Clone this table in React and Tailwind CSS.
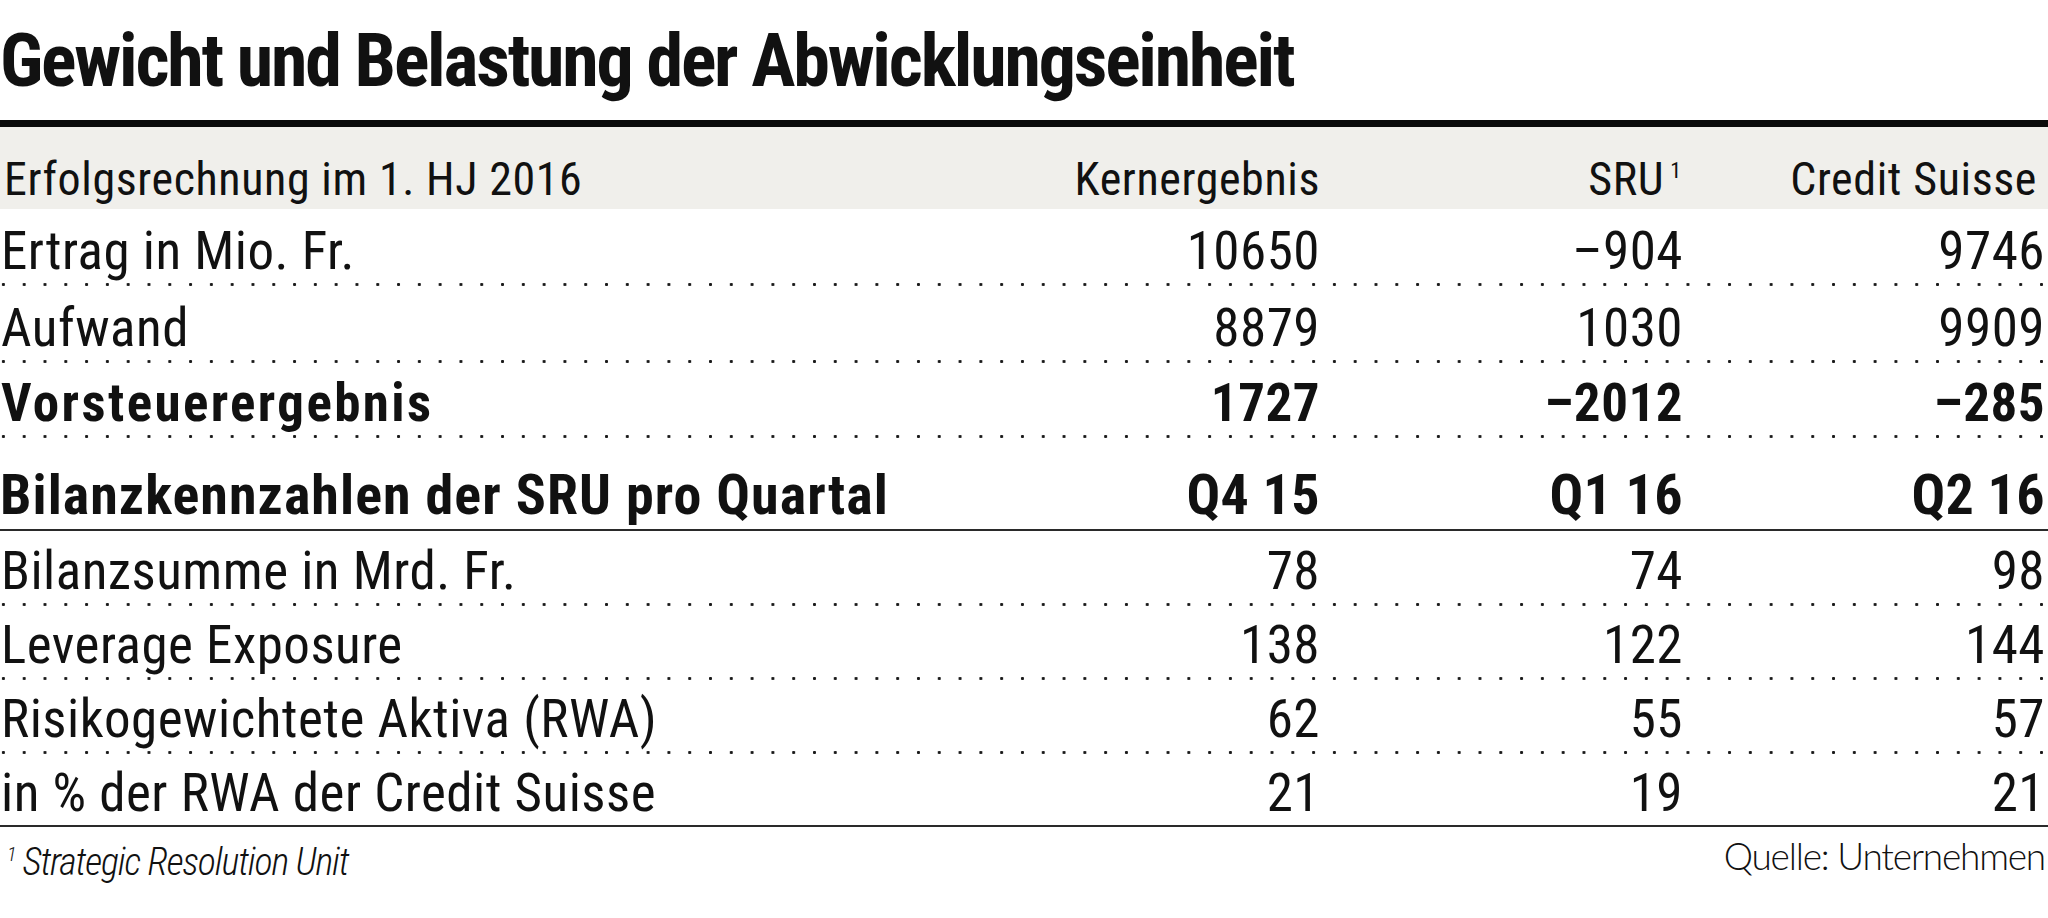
import React from "react";

const cols = "grid grid-cols-[minmax(0,1fr)_363px_363px_362px] pr-[3px]";
const dots =
  "h-[3px] w-full bg-[radial-gradient(circle,#1a1a1a_1.3px,transparent_1.8px)] bg-[length:20.8px_3px] bg-repeat-x bg-[position:-7px_0px]";

const Row = ({ label, values, bold, pad, line = "dots" }) => (
  <div>
    <div
      className={`${cols} ${pad} leading-[64px] text-[53px] tracking-[0.5px] ${
        bold ? "font-bold" : ""
      }`}
    >
      <div className={`pl-[1px] whitespace-nowrap ${bold ? "tracking-[2.4px]" : ""}`}>{label}</div>
      {values.map((v, i) => (
        <div key={i} className="text-right">
          {v}
        </div>
      ))}
    </div>
    {line === "dots" ? (
      <div className={dots} />
    ) : (
      <div className="h-[2px] bg-[#2a2a2a]" />
    )}
  </div>
);

export default function App() {
  return (
    <div className="w-[2048px] h-[918px] overflow-hidden bg-white text-[#111] font-stretch-condensed font-['Roboto_Condensed','Liberation_Sans_Narrow','DejaVu_Sans_Condensed','Noto_Sans',sans-serif]">
      {/* Title */}
      <div className="h-[120px] pt-[21px]">
        <h1 className="text-[74px] leading-[80px] font-bold tracking-[-2.2px] whitespace-nowrap">
          Gewicht und Belastung der Abwicklungseinheit
        </h1>
      </div>
      <div className="h-[7px] bg-[#0b0b0b]" />

      {/* Header band */}
      <div className={`${cols} h-[82px] bg-[#f0efeb] pt-[27px] text-[46px] leading-[50px] tracking-[0.6px]`}>
        <div className="pl-[4px] whitespace-nowrap">Erfolgsrechnung im 1. HJ 2016</div>
        <div className="text-right">Kernergebnis</div>
        <div className="text-right pr-[2px]">
          SRU
          <span className="relative -top-[17px] ml-[6px] text-[22px] leading-none tracking-normal">1</span>
        </div>
        <div className="text-right pr-[8px] whitespace-nowrap">Credit Suisse</div>
      </div>

      <Row label="Ertrag in Mio. Fr." values={["10650", "–904", "9746"]} pad="pt-[10px]" />
      <Row label="Aufwand" values={["8879", "1030", "9909"]} pad="pt-[10px]" />
      <Row label="Vorsteuerergebnis" values={["1727", "–2012", "–285"]} pad="pt-[8px]" bold />

      {/* Balance sheet header */}
      <div className={`${cols} pt-[24px] text-[56px] leading-[67px] font-bold tracking-[0.4px]`}>
        <div className="whitespace-nowrap tracking-[1.05px]">Bilanzkennzahlen der SRU pro Quartal</div>
        <div className="text-right">Q4 15</div>
        <div className="text-right">Q1 16</div>
        <div className="text-right">Q2 16</div>
      </div>
      <div className="h-[2px] bg-[#2a2a2a]" />

      <Row label="Bilanzsumme in Mrd. Fr." values={["78", "74", "98"]} pad="pt-[8px]" />
      <Row label="Leverage Exposure" values={["138", "122", "144"]} pad="pt-[7px]" />
      <Row label="Risikogewichtete Aktiva (RWA)" values={["62", "55", "57"]} pad="pt-[7px]" />
      <Row label="in % der RWA der Credit Suisse" values={["21", "19", "21"]} pad="pt-[7px]" line="solid" />

      {/* Footer */}
      <div className="flex justify-between items-start pr-[3px]">
        <div className="pt-[15px] pl-[7px] text-[38px] leading-[40px] italic font-light tracking-[-1.1px] whitespace-nowrap">
          <span className="relative -top-[14px] mr-[6px] text-[20px] leading-none tracking-normal">1</span>
          Strategic Resolution Unit
        </div>
        <div className="pt-[9px] font-['Lato',sans-serif] font-light font-stretch-normal text-[37px] leading-[40px] tracking-[-1.2px] whitespace-nowrap">
          Quelle: Unternehmen
        </div>
      </div>
    </div>
  );
}
